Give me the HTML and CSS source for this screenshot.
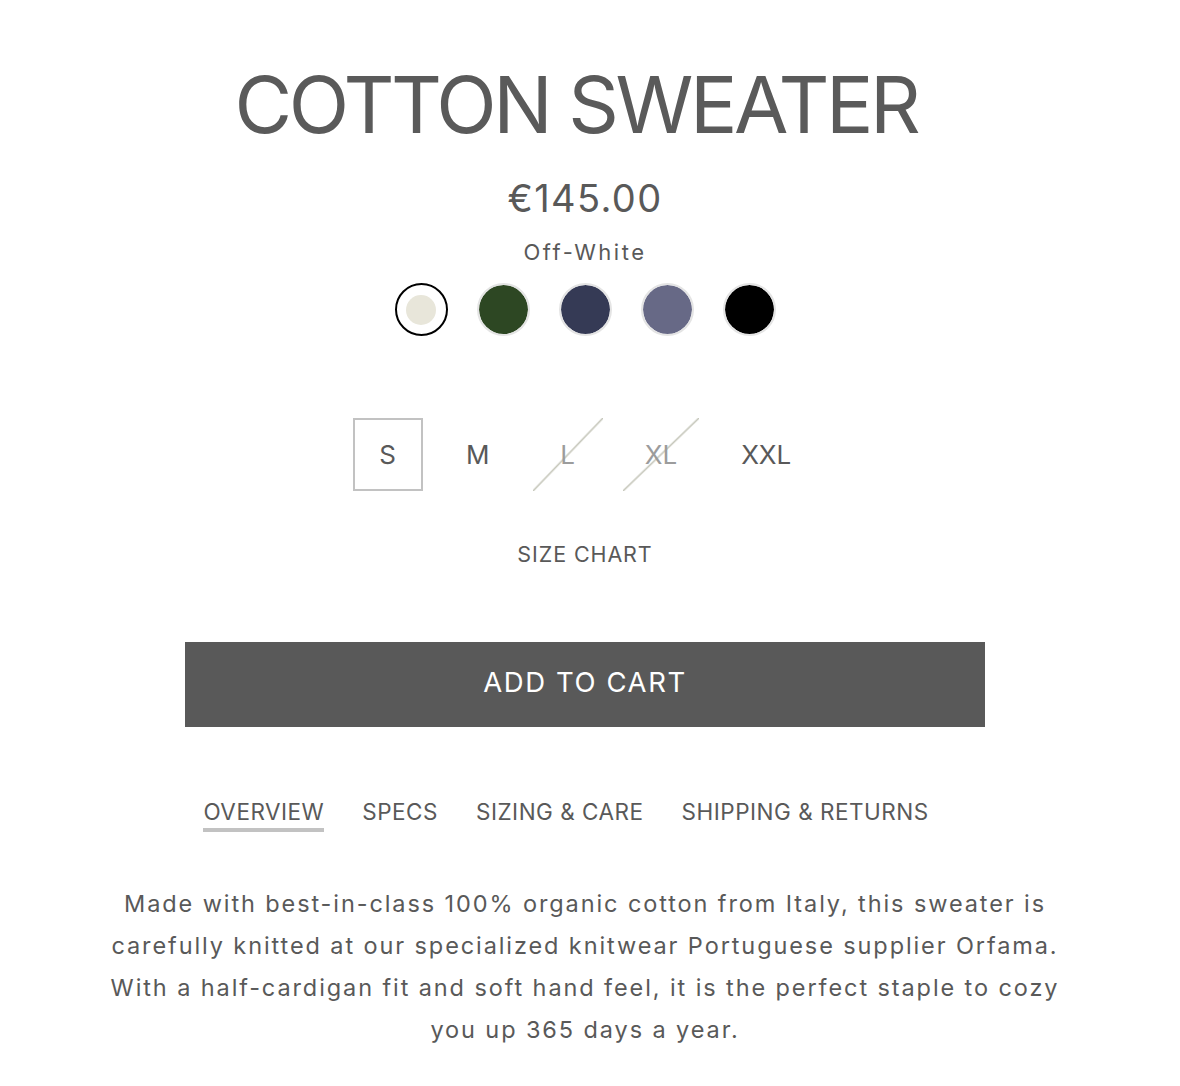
FILE: index.html
```html
<!DOCTYPE html>
<html lang="en">
<head>
<meta charset="utf-8">
<title>Cotton Sweater</title>
<link rel="stylesheet" href="styles.css">
</head>
<body>
<main class="product">
  <h1 class="title">COTTON SWEATER</h1>
  <div class="price">€145.00</div>
  <div class="color-name">Off-White</div>
  <div class="swatches">
    <button class="swatch selected" aria-label="Off-White"><span class="dot off-white"></span></button>
    <button class="swatch" aria-label="Green"><span class="dot green"></span></button>
    <button class="swatch" aria-label="Navy"><span class="dot navy"></span></button>
    <button class="swatch" aria-label="Slate"><span class="dot slate"></span></button>
    <button class="swatch" aria-label="Black"><span class="dot black"></span></button>
  </div>
  <div class="sizes">
    <span class="size active">S</span>
    <span class="size">M</span>
    <span class="size disabled">L</span>
    <span class="size disabled">XL</span>
    <span class="size">XXL</span>
  </div>
  <a class="size-chart" href="#">SIZE CHART</a>
  <button class="add-to-cart">ADD TO CART</button>
  <nav class="tabs">
    <span class="tab current">OVERVIEW</span>
    <span class="tab">SPECS</span>
    <span class="tab">SIZING &amp; CARE</span>
    <span class="tab">SHIPPING &amp; RETURNS</span>
  </nav>
  <p class="description">Made with best-in-class 100% organic cotton from Italy, this sweater is carefully knitted at our specialized knitwear Portuguese supplier Orfama. With a half-cardigan fit and soft hand feel, it is the perfect staple to cozy you up 365 days a year.</p>
</main>
</body>
</html>
```
FILE: styles.css
```css
* { box-sizing: border-box; }

html, body {
  margin: 0;
  padding: 0;
  background: #ffffff;
}

body {
  font-family: "Inter", "Liberation Sans", sans-serif;
  color: #595959;
}

.product {
  width: 1170px;
  display: flex;
  flex-direction: column;
  align-items: center;
  padding-top: 56px;
  padding-bottom: 40px;
}

.title {
  margin: 0;
  font-size: 79px;
  line-height: 96px;
  font-weight: 400;
  letter-spacing: -3.4px;
  color: #5a5a5a;
  padding-right: 18px;
}

.price {
  margin-top: 23px;
  font-size: 38px;
  line-height: 46px;
  letter-spacing: 1.4px;
}

.color-name {
  margin-top: 18px;
  font-size: 22px;
  line-height: 26px;
  letter-spacing: 2.5px;
}

.swatches {
  margin-top: 18px;
  display: flex;
  gap: 29px;
}

.swatch {
  width: 53px;
  height: 53px;
  padding: 0;
  border-radius: 50%;
  border: 2px solid #e4e4e4;
  background: #fff;
  display: flex;
  align-items: center;
  justify-content: center;
  overflow: hidden;
}

.swatch .dot {
  display: block;
  width: 100%;
  height: 100%;
  border-radius: 50%;
}

.swatch.selected {
  border-color: #000;
}

.swatch.selected .dot {
  width: 30px;
  height: 30px;
}

.off-white { background: #e8e6da; }
.green { background: #2d4723; }
.navy { background: #353a55; }
.slate { background: #676986; }
.black { background: #000000; }

.sizes {
  margin-top: 82px;
  margin-right: 4px;
  display: flex;
  gap: 20px;
}

.size {
  min-width: 70px;
  height: 73px;
  padding: 0 20px;
  border: 2px solid transparent;
  display: flex;
  align-items: center;
  justify-content: center;
  font-size: 26px;
  color: #595959;
}

.size.active {
  border-color: #c2c2c2;
}

.size.disabled {
  color: #9c9c9c;
  background-image: linear-gradient(to bottom right, transparent calc(50% - 1.6px), #c6c7bb 50%, transparent calc(50% + 1.6px));
  background-origin: border-box;
  background-repeat: no-repeat;
}

.size-chart {
  margin-top: 50px;
  font-size: 21.5px;
  line-height: 26px;
  letter-spacing: 0.9px;
  color: #595959;
  text-decoration: none;
}

.add-to-cart {
  margin-top: 75px;
  width: 800px;
  height: 85px;
  border: 0;
  background: #595959;
  color: #ffffff;
  font-family: inherit;
  font-size: 27.5px;
  letter-spacing: 1.6px;
  padding: 0 0 6px;
}

.tabs {
  margin-top: 71px;
  display: flex;
}

.tab {
  margin-right: 38px;
  font-size: 22.5px;
  line-height: 27px;
  letter-spacing: 0.5px;
  padding-bottom: 3px;
  border-bottom: 4px solid transparent;
}

.tab.current {
  border-bottom-color: #c2c2c2;
}

.description {
  margin: 51px 0 0;
  width: 960px;
  text-align: center;
  font-size: 23.5px;
  line-height: 42px;
  letter-spacing: 1.9px;
}
```
